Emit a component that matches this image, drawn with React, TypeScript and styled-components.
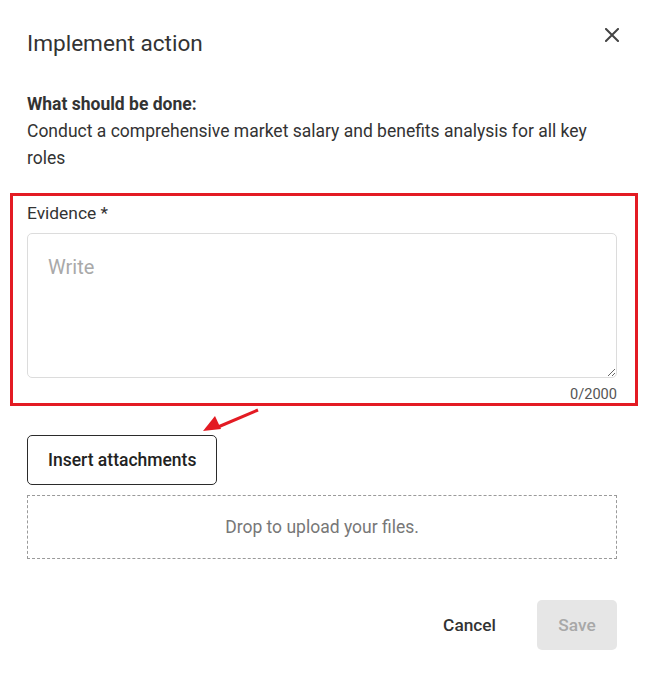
import React from "react";
import styled, { createGlobalStyle } from "styled-components";

const Global = createGlobalStyle`
  html, body { margin: 0; padding: 0; background: #fff; }
  body { font-family: Roboto, "Noto Sans", Arial, sans-serif; color: #333; }
  * { box-sizing: border-box; }
`;

const Dialog = styled.div`
  width: 647px;
  min-height: 677px;
  background: #fff;
  padding: 30px 30px 27px 27px;
  display: flex;
  flex-direction: column;
`;

const Header = styled.div`
  display: flex;
  justify-content: space-between;
  align-items: flex-start;
`;

const Title = styled.h2`
  margin: 0;
  font-size: 22.6px;
  line-height: 28px;
  font-weight: 400;
  color: #333;
`;

const CloseButton = styled.button`
  width: 24px;
  height: 24px;
  margin: -7px -7px 0 0;
  padding: 0;
  border: none;
  background: transparent;
  display: flex;
  align-items: center;
  justify-content: center;
  cursor: pointer;
`;

const Info = styled.div`
  margin-top: 33px;
  font-size: 17.5px;
  line-height: 27px;
  color: #333;
`;

const InfoHeading = styled.div`
  font-weight: 700;
  color: #333;
`;

const Field = styled.div`
  position: relative;
  margin-top: 29px;
  display: flex;
  flex-direction: column;
`;

const Label = styled.label`
  font-size: 17.4px;
  line-height: 24px;
  color: #333;
`;

const TextArea = styled.textarea`
  margin-top: 8px;
  width: 100%;
  height: 145px;
  border: 1px solid #dcdcdc;
  border-radius: 5px;
  padding: 21px 20px;
  font-family: Roboto, "Noto Sans", Arial, sans-serif;
  font-size: 20px;
  line-height: 24px;
  color: #333;
  outline: none;
  resize: vertical;
  &::placeholder { color: #a9a9a9; }
`;

const Counter = styled.div`
  margin-top: 6px;
  text-align: right;
  font-size: 14.6px;
  line-height: 20px;
  color: #555;
`;

const Highlight = styled.div`
  position: absolute;
  top: -8px;
  left: -17px;
  right: -21px;
  bottom: -2px;
  border: 3px solid #e31b23;
  pointer-events: none;
`;

const Arrow = styled.svg`
  position: absolute;
  left: 173px;
  top: 203px;
  overflow: visible;
`;

const AttachButton = styled.button`
  margin-top: 31px;
  align-self: flex-start;
  height: 50px;
  padding: 0 20px;
  border: 1px solid #2b2b2b;
  border-radius: 5px;
  background: #fff;
  font-family: Roboto, "Noto Sans", Arial, sans-serif;
  font-size: 17.5px;
  font-weight: 500;
  color: #222;
  cursor: pointer;
`;

const DropZone = styled.div`
  margin-top: 10px;
  height: 64px;
  border: 1px dashed #9a9a9a;
  display: flex;
  align-items: center;
  justify-content: center;
  font-size: 17.5px;
  color: #777;
`;

const Footer = styled.div`
  margin-top: 41px;
  display: flex;
  justify-content: flex-end;
  align-items: center;
  gap: 25px;
`;

const FooterButton = styled.button<{ $primary?: boolean }>`
  height: 50px;
  min-width: ${(p) => (p.$primary ? "80px" : "auto")};
  padding: 0 16px;
  border: none;
  border-radius: 5px;
  background: ${(p) => (p.$primary ? "#e6e6e6" : "transparent")};
  color: ${(p) => (p.$primary ? "#a8a8a8" : "#333")};
  font-family: Roboto, "Noto Sans", Arial, sans-serif;
  font-size: 17.3px;
  font-weight: 500;
  cursor: pointer;
`;

export default function App() {
  return (
    <>
      <Global />
      <Dialog>
        <Header>
          <Title>Implement action</Title>
          <CloseButton aria-label="Close">
            <svg width="14" height="14" viewBox="0 0 14 14">
              <path d="M1 1L13 13M13 1L1 13" stroke="#444" strokeWidth="2" strokeLinecap="square" />
            </svg>
          </CloseButton>
        </Header>
        <Info>
          <InfoHeading>What should be done:</InfoHeading>
          <div>Conduct a comprehensive market salary and benefits analysis for all key roles</div>
        </Info>
        <Field>
          <Label>Evidence *</Label>
          <TextArea placeholder="Write" />
          <Counter>0/2000</Counter>
          <Highlight />
          <Arrow width="60" height="32" viewBox="0 0 60 32">
            <line x1="58" y1="6" x2="18" y2="23" stroke="#e31b23" strokeWidth="3" />
            <polygon points="3,27 15,12 21,25" fill="#e31b23" />
          </Arrow>
        </Field>
        <AttachButton>Insert attachments</AttachButton>
        <DropZone>Drop to upload your files.</DropZone>
        <Footer>
          <FooterButton>Cancel</FooterButton>
          <FooterButton $primary>Save</FooterButton>
        </Footer>
      </Dialog>
    </>
  );
}
